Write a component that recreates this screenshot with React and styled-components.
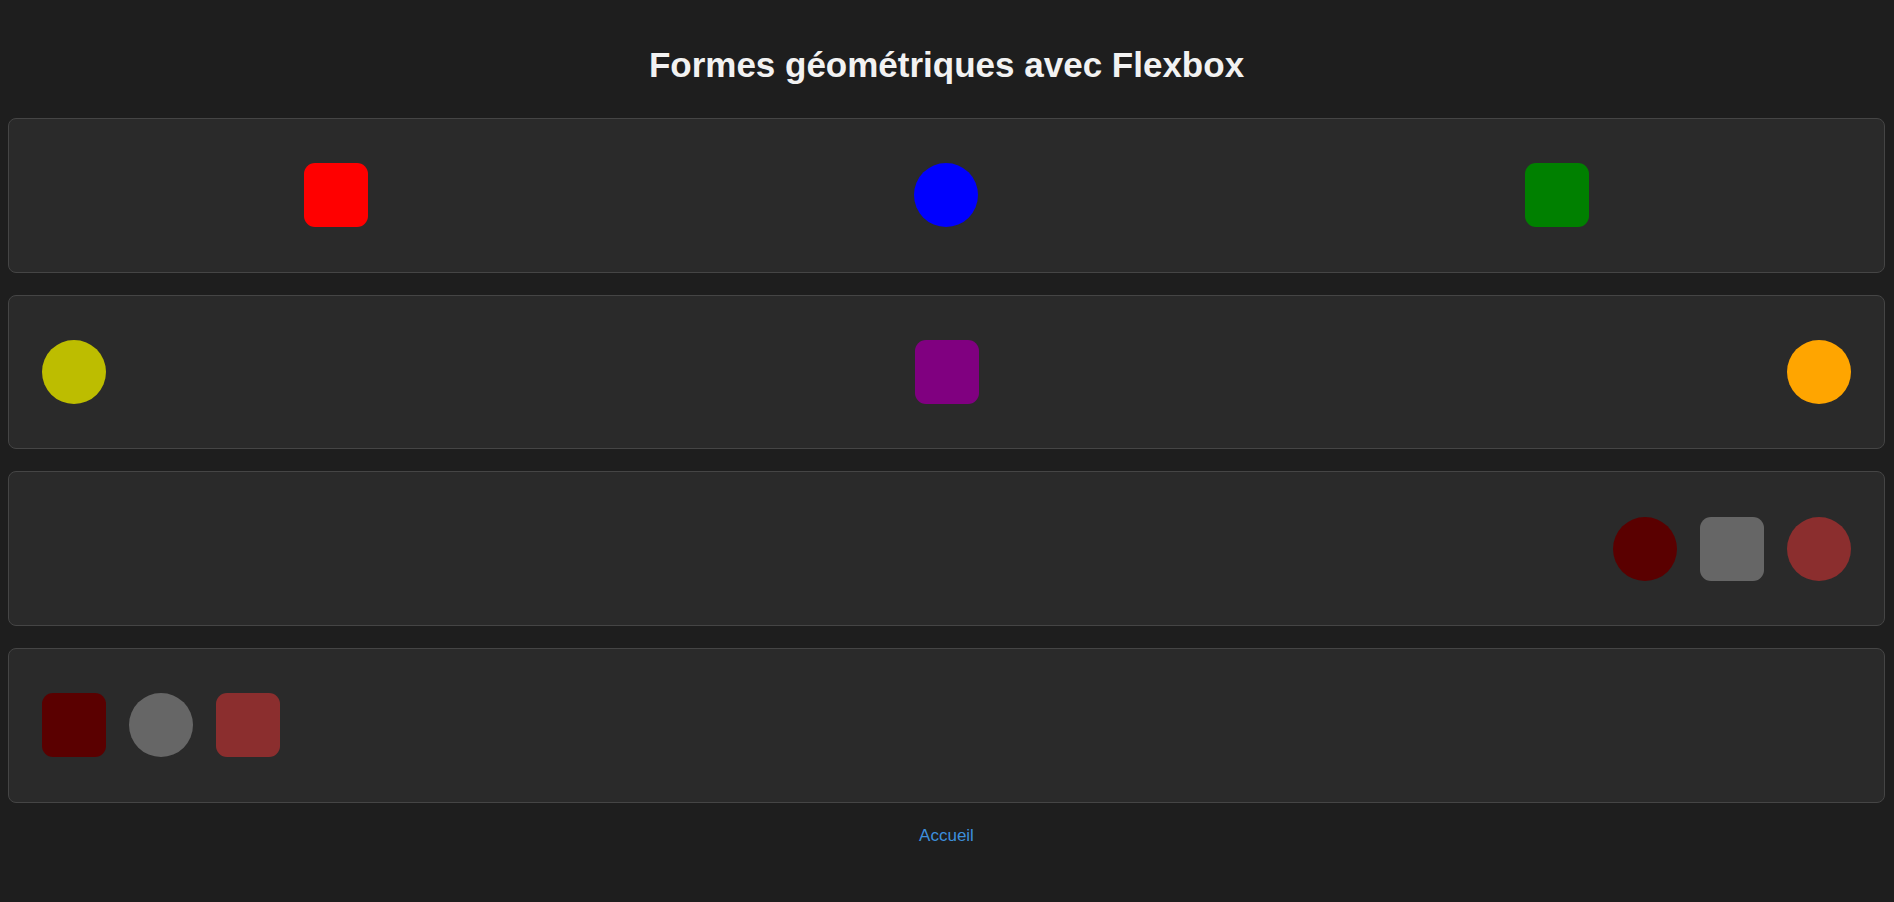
import React from 'react'
import styled, { createGlobalStyle } from 'styled-components'

const GlobalStyle = createGlobalStyle`
  html, body {
    margin: 0;
    padding: 0;
    background: #1e1e1e;
    font-family: "Liberation Sans", Arial, sans-serif;
  }
`

const Page = styled.main`
  min-height: 902px;
  padding: 0 9px 0 8px;
  box-sizing: border-box;
  display: flex;
  flex-direction: column;
`

const Titre = styled.h1`
  margin: 45px 0 33px;
  text-align: center;
  font-size: 35px;
  font-weight: 700;
  color: #f2f2f2;
`

const Rangee = styled.section`
  display: flex;
  align-items: center;
  justify-content: ${props => props.$justify};
  gap: 23px;
  padding: 44.33px 33px;
  margin-bottom: 22px;
  background: #2a2a2a;
  border: 1px solid #454545;
  border-radius: 8px;
`

const Forme = styled.div`
  width: 64px;
  height: 64px;
  flex-shrink: 0;
  background: ${props => props.$couleur};
  border-radius: ${props => (props.$rond ? '50%' : '11px')};
`

const PiedPage = styled.nav`
  display: flex;
  justify-content: center;
  margin-top: 1px;
`

const Lien = styled.a`
  font-size: 17px;
  color: #3d8fdc;
  text-decoration: none;
`

const rangees = [
  {
    justify: 'space-around',
    formes: [
      { couleur: '#ff0000' },
      { couleur: '#0000ff', rond: true },
      { couleur: '#008000' },
    ],
  },
  {
    justify: 'space-between',
    formes: [
      { couleur: '#bdbd00', rond: true },
      { couleur: '#800080' },
      { couleur: '#ffa500', rond: true },
    ],
  },
  {
    justify: 'flex-end',
    formes: [
      { couleur: '#5a0000', rond: true },
      { couleur: '#666666' },
      { couleur: '#8b2e2e', rond: true },
    ],
  },
  {
    justify: 'flex-start',
    formes: [
      { couleur: '#5a0000' },
      { couleur: '#666666', rond: true },
      { couleur: '#8b2e2e' },
    ],
  },
]

export default function App() {
  return (
    <>
      <GlobalStyle />
      <Page>
        <Titre>Formes géométriques avec Flexbox</Titre>
        {rangees.map((rangee, i) => (
          <Rangee key={i} $justify={rangee.justify}>
            {rangee.formes.map((forme, j) => (
              <Forme key={j} $couleur={forme.couleur} $rond={forme.rond} />
            ))}
          </Rangee>
        ))}
        <PiedPage>
          <Lien href="#">Accueil</Lien>
        </PiedPage>
      </Page>
    </>
  )
}
